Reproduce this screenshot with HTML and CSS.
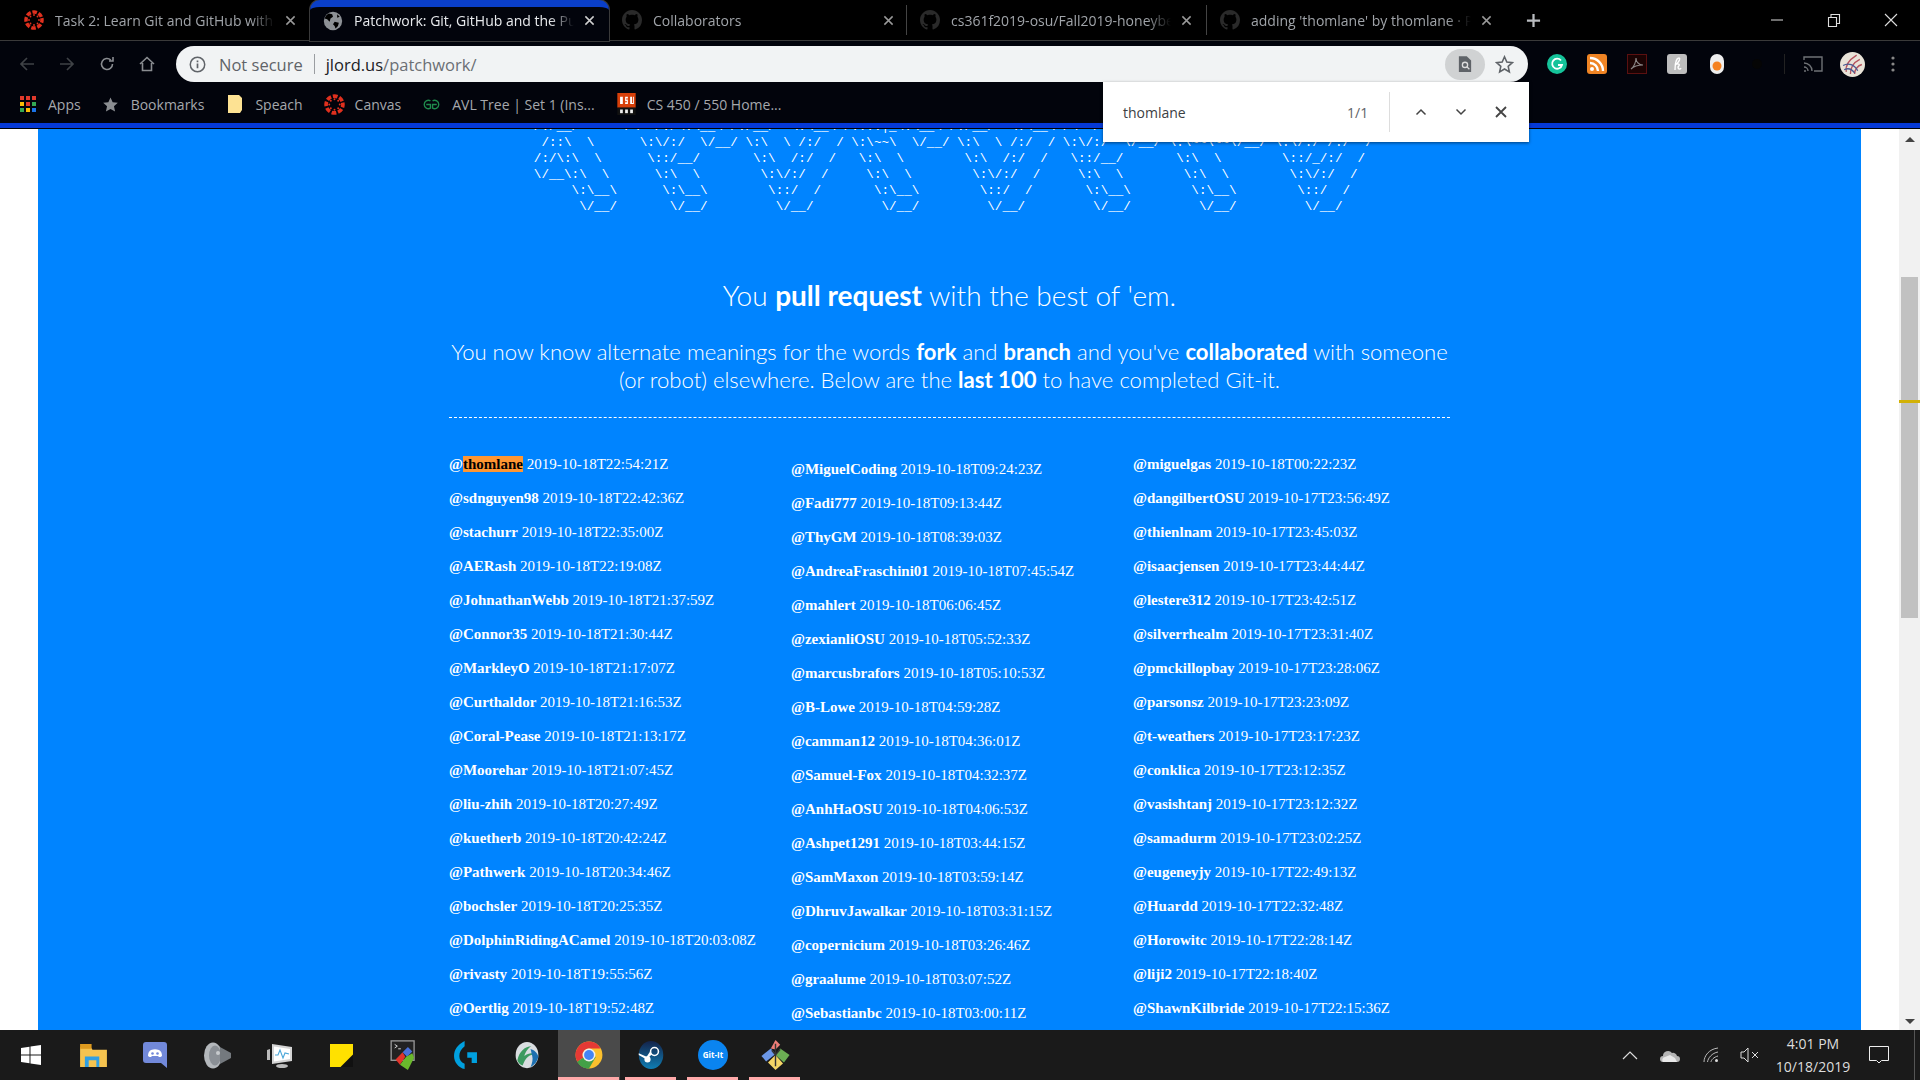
FILE: index.html
```html
<!DOCTYPE html>
<html lang="en">
<head>
<meta charset="utf-8">
<title>Patchwork: Git, GitHub and the Pull Request</title>
<link rel="stylesheet" href="styles.css">
</head>
<body>
<svg class="sprite" width="0" height="0">
  <symbol id="canvas" viewBox="0 0 24 24">
    <circle cx="12" cy="12" r="9.6" fill="none" stroke="#e0301e" stroke-width="4.2" stroke-dasharray="5.4 2.14" transform="rotate(-13 12 12)"/>
    <circle cx="12" cy="6" r="1.1" fill="#e0301e"/><circle cx="12" cy="18" r="1.1" fill="#e0301e"/><circle cx="6" cy="12" r="1.1" fill="#e0301e"/><circle cx="18" cy="12" r="1.1" fill="#e0301e"/>
    <circle cx="7.8" cy="7.8" r="1.1" fill="#e0301e"/><circle cx="16.2" cy="7.8" r="1.1" fill="#e0301e"/><circle cx="7.8" cy="16.2" r="1.1" fill="#e0301e"/><circle cx="16.2" cy="16.2" r="1.1" fill="#e0301e"/>
  </symbol>
  <symbol id="gh" viewBox="0 0 16 16">
    <path fill="#2a2a2a" d="M8 0C3.58 0 0 3.58 0 8c0 3.54 2.29 6.53 5.47 7.59.4.07.55-.17.55-.38 0-.19-.01-.82-.01-1.49-2.01.37-2.53-.49-2.69-.94-.09-.23-.48-.94-.82-1.13-.28-.15-.68-.52-.01-.53.63-.01 1.08.58 1.23.82.72 1.21 1.87.87 2.33.66.07-.52.28-.87.51-1.07-1.78-.2-3.64-.89-3.64-3.95 0-.87.31-1.59.82-2.15-.08-.2-.36-1.02.08-2.12 0 0 .67-.21 2.2.82.64-.18 1.32-.27 2-.27.68 0 1.36.09 2 .27 1.53-1.04 2.2-.82 2.2-.82.44 1.1.16 1.92.08 2.12.51.56.82 1.27.82 2.15 0 3.07-1.87 3.75-3.65 3.95.29.25.54.73.54 1.48 0 1.07-.01 1.93-.01 2.2 0 .21.15.46.55.38A8.013 8.013 0 0016 8c0-4.42-3.58-8-8-8z"/>
  </symbol>
  <symbol id="x" viewBox="0 0 12 12"><path d="M1.5 1.5l9 9M10.5 1.5l-9 9" fill="none" stroke="currentColor" stroke-width="1.6"/></symbol>
</svg>

<header class="tabs">
  <div class="tab">
    <svg class="fav"><use href="#canvas"/></svg><span class="title">Task 2: Learn Git and GitHub with this free course</span><svg class="tab-x"><use href="#x"/></svg>
  </div>
  <div class="tab active">
    <svg class="fav" viewBox="0 0 24 24"><circle cx="12" cy="12" r="11" fill="#8d9196"/><path fill="#000" d="M7 3l4 1 1 3-3 2-1 4-3-3-3-1c1-3 3-5 5-6zM14 13l5 1-1 4-3 3-1-3-2-2zM17 4l3 3-3 1z"/></svg><span class="title">Patchwork: Git, GitHub and the Pull Request</span><svg class="tab-x"><use href="#x"/></svg>
  </div>
  <div class="tab">
    <svg class="fav"><use href="#gh"/></svg><span class="title">Collaborators</span><svg class="tab-x"><use href="#x"/></svg>
  </div>
  <i class="tab-sep tab-sep-first"></i>
  <div class="tab">
    <svg class="fav"><use href="#gh"/></svg><span class="title">cs361f2019-osu/Fall2019-honeybees</span><svg class="tab-x"><use href="#x"/></svg>
  </div>
  <i class="tab-sep"></i>
  <div class="tab">
    <svg class="fav"><use href="#gh"/></svg><span class="title">adding 'thomlane' by thomlane · Pull</span><svg class="tab-x"><use href="#x"/></svg>
  </div>
  <svg class="new-tab" viewBox="0 0 16 16"><path d="M8 1v14M1 8h14" stroke="#b9bcc0" stroke-width="2.4"/></svg>
  <div class="win">
    <svg viewBox="0 0 14 14"><path d="M1 7h12" stroke="#ddd" stroke-width="1"/></svg>
    <svg viewBox="0 0 14 14"><path d="M1.5 4.5h8v9h-8zM4 4.5v-3h8.500v9h-3" fill="none" stroke="#ddd" stroke-width="1.100"/></svg>
    <svg viewBox="0 0 14 14"><path d="M1 1l12 12M13 1L1 13" stroke="#ddd" stroke-width="1.100"/></svg>
  </div>
</header>

<nav class="toolbar">
  <div class="nav-btns">
    <svg viewBox="0 0 16 16"><path d="M15 8H2M8 2L2 8l6 6" fill="none" stroke="#3f4246" stroke-width="1.700"/></svg>
    <svg viewBox="0 0 16 16"><path d="M1 8h13M8 2l6 6-6 6" fill="none" stroke="#3f4246" stroke-width="1.700"/></svg>
    <svg viewBox="0 0 16 16"><path d="M13.500 8a5.500 5.500 0 1 1-1.700-4M14 1v4h-4" fill="none" stroke="#8a8d91" stroke-width="1.600"/></svg>
    <svg viewBox="0 0 16 16"><path d="M1 8l7-6.500L15 8M3.500 7v7.500h9V7" fill="none" stroke="#8a8d91" stroke-width="1.600"/></svg>
  </div>
  <div class="omni">
    <svg class="info" viewBox="0 0 16 16"><circle cx="8" cy="8" r="6.800" fill="none" stroke="#5f6368" stroke-width="1.400"/><path d="M8 7v4.500M8 4.200v1.600" stroke="#5f6368" stroke-width="1.600"/></svg>
    <span class="insecure">Not secure</span><i class="omni-sep"></i>
    <span class="url">jlord.us<em>/patchwork/</em></span>
    <span class="lens"><svg viewBox="0 0 16 18"><path d="M1 0h9l5 5v13H1z" fill="#5f6368"/><circle cx="8" cy="10" r="3" fill="none" stroke="#ddd" stroke-width="1.500"/><path d="M10 12l3 3" stroke="#ddd" stroke-width="1.500"/></svg></span>
    <svg class="star" viewBox="0 0 18 18"><path d="M9 1.700l2.200 4.900 5.300.6-4 3.500 1.100 5.300L9 13.300l-4.600 2.700 1.100-5.300-4-3.500 5.300-.6z" fill="none" stroke="#5f6368" stroke-width="1.500"/></svg>
  </div>
  <div class="exts">
    <svg viewBox="0 0 20 20"><circle cx="10" cy="10" r="10" fill="#15c39a"/><path d="M14 6.500A5 5 0 1 0 15 11h-4" fill="none" stroke="#fff" stroke-width="1.800"/></svg>
    <svg viewBox="0 0 20 20"><rect width="20" height="20" rx="3" fill="#ef8424"/><circle cx="5" cy="15" r="2" fill="#fff"/><path d="M3 9a8 8 0 0 1 8 8M3 4a13 13 0 0 1 13 13" fill="none" stroke="#fff" stroke-width="2.400"/></svg>
    <svg viewBox="0 0 20 20"><rect x=".5" y=".5" width="19" height="19" fill="#1a0303" stroke="#5a1010"/><path d="M4 15c3-2 5-7 5-11 0 4 3 7 7 7-4 0-9 1-12 4z" fill="none" stroke="#8a8686" stroke-width="1.100"/></svg>
    <svg viewBox="0 0 20 20"><rect width="20" height="20" rx="3" fill="#bdbdbd"/><path d="M8 16c0-5 1-12 4-12 2 0-1 6-4 7 3-2 6-1 3 2 0 2 2 3 3 1" fill="none" stroke="#fff" stroke-width="1.400"/></svg>
    <svg viewBox="0 0 20 20"><rect x="3" y="0" width="14" height="20" rx="7" fill="#eee"/><circle cx="10" cy="12" r="4.500" fill="#f58220"/></svg>
    <svg viewBox="0 0 20 20"><circle cx="10" cy="10" r="5" fill="#050505"/></svg>
  </div>
  <i class="tool-sep"></i>
  <svg class="cast" viewBox="0 0 20 16"><path d="M1 4V1h18v14h-8M1 15h2M1 11a4 4 0 0 1 4 4M1 7a8 8 0 0 1 8 8" fill="none" stroke="#6f7276" stroke-width="1.400"/></svg>
  <svg class="avatar" viewBox="0 0 24 24"><circle cx="12" cy="12" r="12" fill="#e9e3d8"/><path d="M16 3C8 8 5 14 6 19M19 7c-6 3-9 8-9 14M21 12c-4 1-7 5-7 9" fill="none" stroke="#b5525d" stroke-width="1.300"/><path d="M3 13c5-3 11-1 14 5M4 17c4-2 7-1 10 3" fill="none" stroke="#4a5a92" stroke-width="1.200"/></svg>
  <svg class="menu" viewBox="0 0 4 16"><circle cx="2" cy="2" r="1.600" fill="#888"/><circle cx="2" cy="8" r="1.600" fill="#888"/><circle cx="2" cy="14" r="1.600" fill="#888"/></svg>
</nav>

<nav class="bookmarks">
  <span class="bm b-apps"><svg viewBox="0 0 16 16"><g fill="#e0392b"><rect width="4" height="4"/><rect x="6" width="4" height="4"/><rect x="12" width="4" height="4"/></g><g fill="#fbbc05"><rect y="6" width="4" height="4"/><rect x="6" y="6" width="4" height="4" fill="#e0392b"/><rect x="12" y="6" width="4" height="4" fill="#34a853"/></g><g fill="#1a73e8"><rect y="12" width="4" height="4" fill="#34a853"/><rect x="6" y="12" width="4" height="4" fill="#fbbc05"/><rect x="12" y="12" width="4" height="4"/></g></svg>Apps</span>
  <span class="bm b-book"><svg viewBox="0 0 16 16"><path d="M8 .5l2.300 5.100 5.500.6-4.100 3.700 1.200 5.500L8 12.700 3.100 15.400l1.200-5.500L.2 6.200l5.500-.6z" fill="#8a8d91"/></svg>Bookmarks</span>
  <span class="bm b-speach"><svg viewBox="0 0 14 18"><path d="M0 0h11l3 3v12l-2 3H0z" fill="#fde293"/></svg>Speach</span>
  <span class="bm b-canvas"><svg><use href="#canvas"/></svg>Canvas</span>
  <span class="bm b-avl"><svg viewBox="0 0 20 14"><path d="M9 3.500A4 4 0 1 0 9 10.500V7H5M11 3.500a4 4 0 1 1 0 7V7h4" fill="none" stroke="#1f8a4c" stroke-width="1.300"/></svg>AVL Tree | Set 1 (Ins...</span>
  <span class="bm b-dsu"><svg viewBox="0 0 20 24"><rect width="20" height="16" fill="#d73f09"/><rect y="16" width="20" height="8" fill="#111"/><path d="M3 4h3v8H3zM8.500 4h3v2h-2v1h2v5h-3v-2h2V9h-2zM14 4h2v7h1V4h1v8h-4z" fill="#fff"/><rect x="3" y="18" width="3" height="4" fill="#eee"/><rect x="8.500" y="18" width="3" height="4" fill="#eee"/><rect x="14" y="18" width="3" height="4" fill="#eee"/></svg>CS 450 / 550 Home...</span>
</nav>

<div class="accent"></div>

<main class="viewport">
  <div class="page">
    <div class="sheet">
<pre class="ascii">  /:/__/      /\  /:/\:\__\ /:/__/  \:\__\ /::::|_\:\__\ /:/__/  \:\__\ /\  /:/\:\__\ /:::|_\:\~\__\ /:/\:\_\:\__\
   /::\  \      \:\/:/  \/__/ \:\  \ /:/  / \:\~~\  \/__/ \:\  \ /:/  / \:\/:/  \/__/ \:\~~\~~\/__/ \:\/:/ /:/  /
  /:/\:\  \      \::/__/       \:\  /:/  /   \:\  \        \:\  /:/  /   \::/__/       \:\  \        \::/_/:/  /
  \/__\:\  \      \:\  \        \:\/:/  /     \:\  \        \:\/:/  /     \:\  \        \:\  \        \:\/:/  /
       \:\__\      \:\__\        \::/  /       \:\__\        \::/  /       \:\__\        \:\__\        \::/  /
        \/__/       \/__/         \/__/         \/__/         \/__/         \/__/         \/__/         \/__/</pre>
      <h2 class="lead">You <b>pull request</b> with the best of 'em.</h2>
      <p class="intro">You now know alternate meanings for the words <b>fork</b> and <b>branch</b> and you've <b>collaborated</b> with someone (or robot) elsewhere. Below are the <b>last 100</b> to have completed Git-it.</p>
      <hr class="rule">
      <section class="list">
        <ul class="col">
          <li><b>@<mark>thomlane</mark></b> 2019-10-18T22:54:21Z</li>
          <li><b>@sdnguyen98</b> 2019-10-18T22:42:36Z</li>
          <li><b>@stachurr</b> 2019-10-18T22:35:00Z</li>
          <li><b>@AERash</b> 2019-10-18T22:19:08Z</li>
          <li><b>@JohnathanWebb</b> 2019-10-18T21:37:59Z</li>
          <li><b>@Connor35</b> 2019-10-18T21:30:44Z</li>
          <li><b>@MarkleyO</b> 2019-10-18T21:17:07Z</li>
          <li><b>@Curthaldor</b> 2019-10-18T21:16:53Z</li>
          <li><b>@Coral-Pease</b> 2019-10-18T21:13:17Z</li>
          <li><b>@Moorehar</b> 2019-10-18T21:07:45Z</li>
          <li><b>@liu-zhih</b> 2019-10-18T20:27:49Z</li>
          <li><b>@kuetherb</b> 2019-10-18T20:42:24Z</li>
          <li><b>@Pathwerk</b> 2019-10-18T20:34:46Z</li>
          <li><b>@bochsler</b> 2019-10-18T20:25:35Z</li>
          <li><b>@DolphinRidingACamel</b> 2019-10-18T20:03:08Z</li>
          <li><b>@rivasty</b> 2019-10-18T19:55:56Z</li>
          <li><b>@Oertlig</b> 2019-10-18T19:52:48Z</li>
        </ul>
        <ul class="col col-mid">
          <li><b>@MiguelCoding</b> 2019-10-18T09:24:23Z</li>
          <li><b>@Fadi777</b> 2019-10-18T09:13:44Z</li>
          <li><b>@ThyGM</b> 2019-10-18T08:39:03Z</li>
          <li><b>@AndreaFraschini01</b> 2019-10-18T07:45:54Z</li>
          <li><b>@mahlert</b> 2019-10-18T06:06:45Z</li>
          <li><b>@zexianliOSU</b> 2019-10-18T05:52:33Z</li>
          <li><b>@marcusbrafors</b> 2019-10-18T05:10:53Z</li>
          <li><b>@B-Lowe</b> 2019-10-18T04:59:28Z</li>
          <li><b>@camman12</b> 2019-10-18T04:36:01Z</li>
          <li><b>@Samuel-Fox</b> 2019-10-18T04:32:37Z</li>
          <li><b>@AnhHaOSU</b> 2019-10-18T04:06:53Z</li>
          <li><b>@Ashpet1291</b> 2019-10-18T03:44:15Z</li>
          <li><b>@SamMaxon</b> 2019-10-18T03:59:14Z</li>
          <li><b>@DhruvJawalkar</b> 2019-10-18T03:31:15Z</li>
          <li><b>@copernicium</b> 2019-10-18T03:26:46Z</li>
          <li><b>@graalume</b> 2019-10-18T03:07:52Z</li>
          <li><b>@Sebastianbc</b> 2019-10-18T03:00:11Z</li>
        </ul>
        <ul class="col">
          <li><b>@miguelgas</b> 2019-10-18T00:22:23Z</li>
          <li><b>@dangilbertOSU</b> 2019-10-17T23:56:49Z</li>
          <li><b>@thienlnam</b> 2019-10-17T23:45:03Z</li>
          <li><b>@isaacjensen</b> 2019-10-17T23:44:44Z</li>
          <li><b>@lestere312</b> 2019-10-17T23:42:51Z</li>
          <li><b>@silverrhealm</b> 2019-10-17T23:31:40Z</li>
          <li><b>@pmckillopbay</b> 2019-10-17T23:28:06Z</li>
          <li><b>@parsonsz</b> 2019-10-17T23:23:09Z</li>
          <li><b>@t-weathers</b> 2019-10-17T23:17:23Z</li>
          <li><b>@conklica</b> 2019-10-17T23:12:35Z</li>
          <li><b>@vasishtanj</b> 2019-10-17T23:12:32Z</li>
          <li><b>@samadurm</b> 2019-10-17T23:02:25Z</li>
          <li><b>@eugeneyjy</b> 2019-10-17T22:49:13Z</li>
          <li><b>@Huardd</b> 2019-10-17T22:32:48Z</li>
          <li><b>@Horowitc</b> 2019-10-17T22:28:14Z</li>
          <li><b>@liji2</b> 2019-10-17T22:18:40Z</li>
          <li><b>@ShawnKilbride</b> 2019-10-17T22:15:36Z</li>
        </ul>
      </section>
    </div>
  </div>
  <aside class="scrollbar">
    <i class="arrow up"></i>
    <div class="track"><div class="thumb"></div><i class="marker"></i></div>
    <i class="arrow down"></i>
  </aside>
</main>

<div class="findbar">
  <span class="find-q">thomlane</span>
  <span class="find-n">1/1</span>
  <i class="find-sep"></i>
  <svg class="chev" viewBox="0 0 12 8"><path d="M1.500 6.500L6 2l4.500 4.500" fill="none" stroke="#444" stroke-width="1.500"/></svg>
  <svg class="chev" viewBox="0 0 12 8"><path d="M1.500 1.500L6 6l4.500-4.500" fill="none" stroke="#444" stroke-width="1.500"/></svg>
  <svg class="find-x" viewBox="0 0 12 12"><path d="M1 1l10 10M11 1L1 11" stroke="#444" stroke-width="1.800"/></svg>
</div>

<footer class="taskbar">
  <div class="task"><svg class="i-win" viewBox="0 0 20 20"><path fill="#fff" d="M0 3l8.500-1.200V9.500H0zM9.500 1.600L20 0v9.500H9.500zM0 10.500h8.500v7.700L0 17zM9.500 10.500H20V20L9.500 18.400z"/></svg></div>
  <div class="task"><svg class="i-folder" viewBox="0 0 28 24"><path d="M0 3h11l2 3h15v18H0z" fill="#f5c34f"/><rect y="0" width="12" height="5" fill="#dd9a1f"/><path d="M5 24V13h15v11h-3v-7H9v7z" fill="#2f9fe3"/></svg></div>
  <div class="task"><svg class="i-discord" viewBox="0 0 24 26"><path d="M3 0h18a3 3 0 0 1 3 3v23l-6-5H3a3 3 0 0 1-3-3V3a3 3 0 0 1 3-3z" fill="#7289da"/><path d="M5 14c0-3 1-5 3-6 3-1 5-1 8 0 2 1 3 3 3 6-1 1-2 1-3 1l-1-1H9l-1 1c-1 0-2 0-3-1z" fill="#fff"/><circle cx="9.500" cy="11.500" r="1.300" fill="#7289da"/><circle cx="14.500" cy="11.500" r="1.300" fill="#7289da"/></svg></div>
  <div class="task"><svg class="i-speaker" viewBox="0 0 27 27"><ellipse cx="9" cy="13.500" rx="9" ry="13" fill="#b4b8bc"/><ellipse cx="11" cy="13.500" rx="6" ry="10" fill="#8b9096"/><circle cx="14" cy="11" r="2" fill="#c7cacd"/><path d="M16 5l11 6v5l-11 6z" fill="#74797e"/></svg></div>
  <div class="task"><svg class="i-monitor" viewBox="0 0 27 25"><path d="M1 7l3-1v11H1z" fill="#bbb"/><path d="M6 1l20 3v14l-20 3z" fill="#d4d4d4"/><path d="M8 3.500l16 2.500v10l-16 2.500z" fill="#fff"/><path d="M9 12l3 0 2-5 3 8 2-5 4 1" fill="none" stroke="#4aa6d8" stroke-width="1.100"/><ellipse cx="16" cy="23" rx="6" ry="2" fill="#bbb"/></svg></div>
  <div class="task"><svg class="i-sticky" viewBox="0 0 24 24"><rect width="24" height="24" fill="#ffe100"/><path d="M24 11v13H11z" fill="#111"/></svg></div>
  <div class="task"><svg class="i-term" viewBox="0 0 30 34"><rect x="1" y="1" width="26" height="22" fill="#222" stroke="#999" stroke-width="1.500"/><path d="M5 5l3 2-3 2M9 10h3" fill="none" stroke="#eee"/><path d="M6 22l8-8 3 5-6 9z" fill="#e3342b"/><path d="M14 14l6-6 5 5-6 6z" fill="#4a70d8"/><path d="M11 28l7-9 7-4 2 5-7 14z" fill="#6ab82c"/></svg></div>
  <div class="task"><svg viewBox="0 0 28 34"><path d="M13 1C5 5 1 11 1 18s5 13 12 15V27C9 25 7 22 7 18s2-8 6-11z" fill="#00a0df"/><path d="M16 14h11v12h-6v-6h-5z" fill="#00a0df"/></svg></div>
  <div class="task"><svg class="i-round" viewBox="0 0 28 32"><ellipse cx="14" cy="16" rx="13" ry="15" fill="#d9dde0"/><path d="M3 22c2-10 9-16 16-16-4 2-7 7-8 11 4-3 9-4 12-2-6 0-11 4-14 13-3-1-5-3-6-6z" fill="#3c9a5f"/><path d="M18 9c4 1 8 4 9 9-1 5-4 9-9 12 2-5 3-9 2-13-1-3-1-5-2-8z" fill="#1c6fb0"/></svg></div>
  <div class="task on"><svg class="i-round" viewBox="0 0 24 24"><circle cx="12" cy="12" r="11.500" fill="#fbc02d"/><path d="M12 12L2 17.700A11.500 11.500 0 0 0 12 23.500l5.800-9.800z" fill="#43a047"/><path d="M2 17.700A11.500 11.500 0 0 1 2 6.200 11.500 11.500 0 0 1 22 6.500H12a5.500 5.500 0 0 0-5 7.800z" fill="#e53935"/><path d="M2 17.700L7 14.300l5 9.200A11.500 11.500 0 0 1 2 17.700z" fill="#43a047"/><circle cx="12" cy="12" r="5.500" fill="#eee"/><circle cx="12" cy="12" r="4.200" fill="#4285f4"/></svg><i class="bar"></i></div>
  <div class="task"><svg class="i-round" viewBox="0 0 28 32"><defs><linearGradient id="steam" x1="0" y1="0" x2="0" y2="1"><stop offset="0" stop-color="#14234a"/><stop offset="1" stop-color="#0f7eb4"/></linearGradient></defs><ellipse cx="14" cy="16" rx="14" ry="16" fill="url(#steam)"/><circle cx="18" cy="12" r="4.500" fill="none" stroke="#fff" stroke-width="1.800"/><path d="M0 16l9 5 6-6-2-3-4 6-9-4z" fill="#fff"/><circle cx="10" cy="21" r="3.500" fill="#fff"/></svg><i class="bar"></i></div>
  <div class="task"><span class="gitit">Git-It</span><i class="bar"></i></div>
  <div class="task"><svg viewBox="0 0 30 32"><path d="M10 9l5-9 5 5-5 5z" fill="#ef7d78"/><path d="M10 9l-10 8 5 6 10-8z" fill="#6b97e8"/><path d="M20 9l10 7-6 8-9-8z" fill="#6cae54"/><path d="M7 24l8-8 8 9-8 7z" fill="#f5d566"/><path d="M15 4v24M11 11l4 5 5-6" stroke="#333" stroke-width="1.500" fill="none"/></svg><i class="bar"></i></div>
  <div class="tray">
    <svg class="t-chev" viewBox="0 0 16 9"><path d="M1 8l7-7 7 7" fill="none" stroke="#ddd" stroke-width="1.200"/></svg>
    <svg class="t-cloud" viewBox="0 0 20 13"><path d="M3 13a3 3 0 0 1 0-6 5 5 0 0 1 9-3 4 4 0 0 1 5 3 3 3 0 0 1 0 6z" fill="#b5b5b5"/><path d="M3 13a3 3 0 0 1 2-5l5-2 5 3 2 4z" fill="#e8e8e8"/></svg>
    <svg class="t-wifi" viewBox="0 0 16 16"><path d="M1 15C1 9 6 2 15 1M4.500 15C5 11 9 6 15 5M8 15c0-2 3-5 7-6" fill="none" stroke="#bbb" stroke-width="1"/><circle cx="13.500" cy="13.500" r="1.500" fill="#ddd"/></svg>
    <svg class="t-vol" viewBox="0 0 20 16"><path d="M1 5h3l4-4v14l-4-4H1z" fill="none" stroke="#ddd"/><path d="M12 5l6 6M18 5l-6 6" stroke="#ddd"/></svg>
    <div class="clock"><span>4:01 PM</span><span>10/18/2019</span></div>
    <svg class="t-note" viewBox="0 0 20 18"><path d="M.5.500h19v14h-7l-2.500 2.500-2.500-2.500h-7z" fill="none" stroke="#eee"/></svg>
    <i class="t-edge"></i>
  </div>
</footer>
</body>
</html>
```

FILE: styles.css
```css
* { box-sizing: border-box; }
html, body { margin: 0; height: 100%; }
body {
  width: 1920px; height: 1080px; overflow: hidden;
  display: flex; flex-direction: column;
  background: #02040c;
  font-family: "Open Sans", "Noto Sans", sans-serif;
  position: relative;
}
.sprite { position: absolute; }

/* tab strip */
.tabs { height: 41px; flex: none; display: flex; align-items: stretch; background: #000; border-bottom: 1px solid #3a3a3a; padding-left: 11px; position: relative; }
.tab { width: 299px; flex: none; display: flex; align-items: center; padding: 0 0 0 13px; color: #a0a4a9; font-size: 14px; }
.tab .fav { width: 20px; height: 20px; flex: none; margin-right: 11px; }
.tab .title { flex: 1; white-space: nowrap; overflow: hidden; min-width: 0; -webkit-mask-image: linear-gradient(to left, transparent 0, #000 24px); mask-image: linear-gradient(to left, transparent 0, #000 24px); }
.tab .tab-x { width: 11px; height: 11px; flex: none; margin: 0 14px 0 10px; color: #9a9a9a; }
.tab.active { color: #e8eaed; border-top: 7px solid #0a3fc9; border-radius: 10px 10px 0 0; background: #02040c; box-shadow: 0 0 0 1px #3a3a3a; height: 41px; padding-bottom: 7px; }
.tab.active .tab-x { color: #d0d0d0; }
.tab-sep { width: 1px; height: 30px; align-self: center; background: #444; flex: none; }
.tab-sep-first { margin-left: -2px; }
.new-tab { width: 15px; height: 15px; align-self: center; margin-left: 20px; flex: none; }
.win { margin-left: auto; display: flex; align-items: center; padding-right: 22px; gap: 43px; }
.win svg { width: 14px; height: 14px; }

/* toolbar */
.toolbar { height: 41px; flex: none; display: flex; align-items: center; padding: 5px 0 0 0; }
.nav-btns { display: flex; gap: 24px; padding-left: 19px; width: 176px; }
.nav-btns svg { width: 16px; height: 16px; flex: none; }
.omni { width: 1352px; height: 36px; background: #f1f3f4; border-radius: 18px; display: flex; align-items: center; padding: 0 10px 0 13px; font-size: 16.5px; color: #5f6368; flex: none; }
.info { width: 17px; height: 17px; margin-right: 13px; }
.omni-sep { width: 1px; height: 20px; background: #9a9da1; margin: 0 11px; }
.url { color: #202124; }
.url em { font-style: normal; color: #6b6f74; }
.lens { margin-left: auto; width: 40px; height: 31px; border-radius: 16px; background: #d0d2d3; display: flex; align-items: center; justify-content: center; }
.lens svg { width: 14px; height: 16px; }
.star { width: 19px; height: 19px; margin-left: 10px; margin-right: 4px; }
.exts { display: flex; gap: 20px; padding-left: 19px; width: 248px; flex: none; }
.exts svg { width: 20px; height: 20px; flex: none; }
.tool-sep { width: 1px; height: 20px; background: #222; margin-left: 8px; flex: none; }
.cast { width: 20px; height: 16px; margin-left: 18px; flex: none; }
.avatar { width: 25px; height: 25px; margin-left: 17px; flex: none; }
.menu { width: 4px; height: 16px; margin-left: 26px; flex: none; }

/* bookmarks */
.bookmarks { height: 41px; flex: none; display: flex; align-items: center; font-size: 14px; color: #a5a8ac; padding: 3px 0 0 20px; }
.bm { display: flex; align-items: center; white-space: nowrap; }
.bm svg { flex: none; }
.b-apps svg { width: 16px; height: 16px; margin-right: 12px; }
.b-book { margin-left: 22px; }
.b-book svg { width: 15px; height: 15px; margin-right: 13px; }
.b-speach { margin-left: 24px; }
.b-speach svg { width: 14px; height: 18px; margin-right: 13px; }
.b-canvas { margin-left: 21px; }
.b-canvas svg { width: 21px; height: 21px; margin-right: 10px; }
.b-avl { margin-left: 20px; }
.b-avl svg { width: 21px; height: 15px; margin-right: 10px; }
.b-dsu { margin-left: 22px; }
.b-dsu svg { width: 19px; height: 22px; margin-right: 11px; }

.accent { height: 6px; flex: none; background: #0539d6; border-bottom: 1px solid #000; }

/* page */
.viewport { flex: 1; min-height: 0; display: flex; position: relative; overflow: hidden; background: #fff; }
.page { flex: 1; min-width: 0; padding: 0 38px; overflow: hidden; }
.sheet { background: #0084ff; height: 100%; color: #fff; overflow: hidden; }
.ascii { margin: -10px auto 0; width: fit-content; padding-left: 0; font: 12.6px/16px "Liberation Mono", monospace; color: #fff; }
.lead { margin: 62px 0 0; text-align: center; font: 300 28px/36px Lato, sans-serif; }
.lead b, .intro b { font-weight: 700; }
.intro { margin: 25px auto 0; width: 1010px; text-align: center; font: 300 22.1px/28px Lato, sans-serif; }
.rule { width: 1001px; margin: 23px auto 0; border: 0; border-top: 1px dashed #fff; }
.list { width: 1001px; margin: 29px auto 0; display: grid; grid-template-columns: repeat(3, 342px); }
.col { list-style: none; margin: 0; padding: 0; }
.col-mid { padding-top: 5px; }
.col li { height: 34px; font: 15px/34px "Liberation Serif", serif; white-space: nowrap; }
mark { background: #ff9632; color: #000; }

/* scrollbar */
.scrollbar { width: 21px; flex: none; background: #f1f1f1; display: flex; flex-direction: column; align-items: center; position: relative; padding: 8px 0 6px; }
.arrow { width: 0; height: 0; border-left: 5px solid transparent; border-right: 5px solid transparent; flex: none; }
.arrow.up { border-bottom: 5px solid #444; }
.arrow.down { border-top: 5px solid #444; }
.track { flex: 1; width: 100%; padding-top: 135px; }
.thumb { width: 17px; height: 341px; background: #c1c1c1; margin: 0 auto; }
.marker { position: absolute; left: 0; right: 0; top: 271px; height: 3px; background: #d2b106; }

/* find bar */
.findbar { position: absolute; left: 1103px; top: 82px; width: 426px; height: 60px; background: #fff; box-shadow: 0 1px 3px rgba(0,0,0,.5); display: flex; align-items: center; padding-left: 20px; font-size: 14px; color: #3c4043; }
.find-q { width: 224px; }
.find-n { width: 42px; color: #5f6368; }
.find-sep { width: 1px; height: 40px; background: #ddd; margin-right: 25px; }
.chev { width: 12px; height: 8px; margin-right: 28px; }
.find-x { width: 12px; height: 12px; }

/* taskbar */
.taskbar { height: 50px; flex: none; display: flex; background: #1a1a1a; position: relative; }
.task { width: 62px; flex: none; display: flex; align-items: center; justify-content: center; position: relative; }
.task svg { width: 29px; height: 30px; }
.task .i-win { width: 20px; height: 20px; }
.task .i-folder { width: 27px; height: 23px; }
.task .i-discord { width: 24px; height: 26px; }
.task .i-speaker { width: 27px; height: 27px; }
.task .i-monitor { width: 27px; height: 25px; }
.task .i-sticky { width: 23px; height: 23px; }
.task .i-round { width: 28px; height: 28px; }
.task.on { background: #4a4a4a; }
.bar { position: absolute; left: 5px; right: 6px; bottom: 0; height: 3px; background: #ffa9a9; }
.task.on .bar { left: 0; right: 1px; }
.gitit { width: 30px; height: 30px; border-radius: 50%; background: #0a84f0; color: #fff; font: 700 8px/30px "Open Sans", sans-serif; text-align: center; }
.tray { margin-left: auto; display: flex; align-items: center; color: #ddd; position: relative; }
.t-chev { width: 16px; height: 9px; margin-right: 22px; }
.t-cloud { width: 20px; height: 13px; margin-right: 23px; }
.t-wifi { width: 16px; height: 16px; margin-right: 21px; }
.t-vol { width: 20px; height: 16px; margin-right: 9px; }
.clock { width: 88px; display: flex; flex-direction: column; align-items: center; font-size: 14px; line-height: 23px; margin-right: 12px; }
.t-note { width: 20px; height: 18px; margin-right: 31px; }
.t-edge { position: absolute; right: 5px; top: 0; bottom: 0; width: 1px; background: #555; }
```
